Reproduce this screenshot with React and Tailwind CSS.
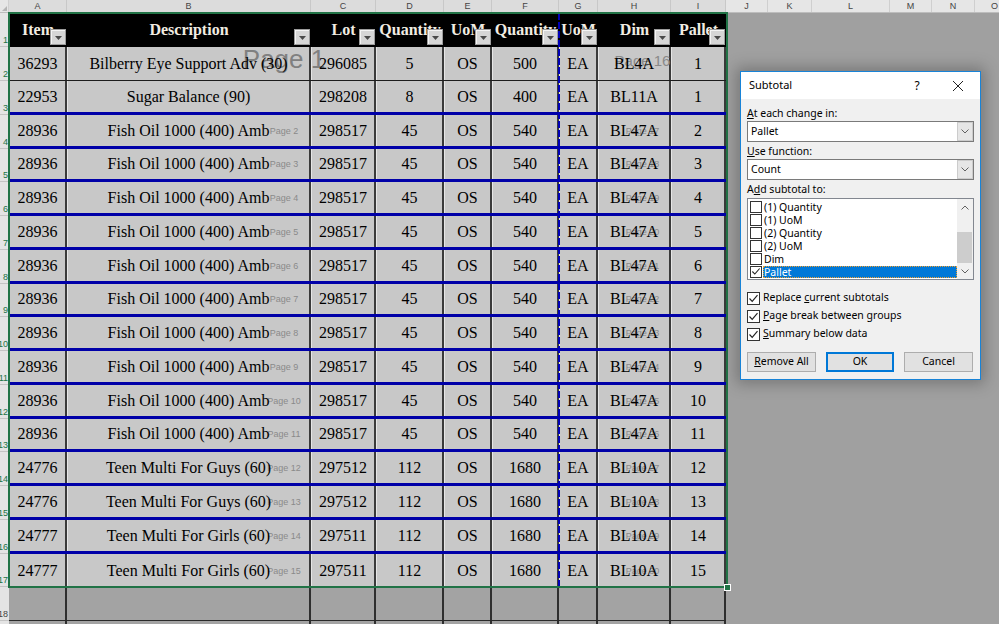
import React from 'react';

const COLS = [
  { l: 'A', w: 'w-[58px]' },
  { l: 'B', w: 'w-[244px]' },
  { l: 'C', w: 'w-[65px]' },
  { l: 'D', w: 'w-[68px]' },
  { l: 'E', w: 'w-[48px]' },
  { l: 'F', w: 'w-[67px]' },
  { l: 'G', w: 'w-[39px]' },
  { l: 'H', w: 'w-[73px]' },
  { l: 'I', w: 'w-[55px]' },
];
const EXTRA = [
  { l: 'J', w: 'w-[42px]' },
  { l: 'K', w: 'w-[44px]' },
  { l: 'L', w: 'w-[78px]' },
  { l: 'M', w: 'w-[42px]' },
  { l: 'N', w: 'w-[43px]' },
  { l: 'O', w: 'w-[40px]' },
];
const HEADERS = ['Item', 'Description', 'Lot', 'Quantity', 'UoM', 'Quantity', 'UoM', 'Dim', 'Pallet'];

const fish = (n) => ['28936', 'Fish Oil 1000 (400) Amb', '298517', '45', 'OS', '540', 'EA', 'BL47A', String(n)];
const ROWS = [
  ['36293', 'Bilberry Eye Support Adv (30)', '296085', '5', 'OS', '500', 'EA', 'BL4A', '1'],
  ['22953', 'Sugar Balance (90)', '298208', '8', 'OS', '400', 'EA', 'BL11A', '1'],
  fish(2), fish(3), fish(4), fish(5), fish(6), fish(7), fish(8), fish(9), fish(10), fish(11),
  ['24776', 'Teen Multi For Guys (60)', '297512', '112', 'OS', '1680', 'EA', 'BL10A', '12'],
  ['24776', 'Teen Multi For Guys (60)', '297512', '112', 'OS', '1680', 'EA', 'BL10A', '13'],
  ['24777', 'Teen Multi For Girls (60)', '297511', '112', 'OS', '1680', 'EA', 'BL10A', '14'],
  ['24777', 'Teen Multi For Girls (60)', '297511', '112', 'OS', '1680', 'EA', 'BL10A', '15'],
];
const HEIGHTS = ['h-[34px]', 'h-[34px]', 'h-[34px]', 'h-[33px]'];

function RowHead({ n, color = 'text-[#217346]' }) {
  return (
    <div className="w-[9px] shrink-0 bg-[#e4e4e4] border-b border-[#c4c4c4] flex items-end justify-end overflow-hidden pr-[1px] pb-[1px]">
      <span className={`text-[9px] leading-[10px] font-['Liberation_Sans',sans-serif] ${color}`}>{n}</span>
    </div>
  );
}

function FilterBtn() {
  return (
    <div className="absolute right-[1px] bottom-[2px] z-20 w-[16px] h-[16px] bg-[#d6d6d6] border border-[#9c9c9c] shadow-[inset_1px_1px_0_#f4f4f4] flex items-center justify-center">
      <svg width="7" height="4" viewBox="0 0 7 4" className="mt-[2px]">
        <polygon points="0,0 7,0 3.5,4" fill="#4a4a4a" />
      </svg>
    </div>
  );
}

function Cell({ w, children }) {
  return (
    <div className={`${w} shrink-0 flex items-center justify-center bg-[#c8c8c8] border-l border-l-[#e6e6e6] border-r-2 border-r-[#3a3a3a] overflow-hidden`}>
      <span className="relative z-10 whitespace-nowrap">{children}</span>
    </div>
  );
}

function PageTag({ children }) {
  return (
    <div className="absolute inset-0 flex items-center justify-center">
      <span className="text-[9px] leading-[10px] text-[#8a8a8a] font-['Liberation_Sans',sans-serif] whitespace-nowrap">{children}</span>
    </div>
  );
}

function DataRow({ i, data }) {
  const h = HEIGHTS[i % 4];
  let bottom = '';
  if (i === 0) bottom = 'border-b border-[#1c1c1c]';
  else if (i < 15) bottom = 'border-b-[3px] border-[#0000a8]';
  return (
    <div className={`flex ${h}`}>
      <RowHead n={i + 2} />
      <div className={`flex ${bottom}`}>
        <div className="relative flex">
          {i >= 2 && <PageTag>Page {i}</PageTag>}
          {COLS.slice(0, 6).map((c, k) => (
            <Cell key={c.l} w={c.w}>{data[k]}</Cell>
          ))}
        </div>
        <div className="relative flex">
          {COLS.slice(6).map((c, k) => (
            <Cell key={c.l} w={c.w}>{data[k + 6]}</Cell>
          ))}
          {i >= 2 && <PageTag>Page {i + 15}</PageTag>}
        </div>
      </div>
    </div>
  );
}

function Chevron({ up = false }) {
  return (
    <svg width="8" height="5" viewBox="0 0 8 5">
      <polyline
        points={up ? '0.5,4.5 4,1 7.5,4.5' : '0.5,0.5 4,4 7.5,0.5'}
        fill="none"
        stroke="#606060"
        strokeWidth="1"
      />
    </svg>
  );
}

function Check() {
  return (
    <svg width="11" height="11" viewBox="0 0 11 11">
      <polyline points="1.5,5.5 4.2,8.3 9.5,2.2" fill="none" stroke="#222" strokeWidth="1.2" />
    </svg>
  );
}

function Select({ value }) {
  return (
    <div className="mt-[1px] h-[21px] w-[227px] bg-white border border-[#7a7a7a] flex">
      <div className="flex-1 flex items-center pl-[3px]">{value}</div>
      <div className="w-[16px] bg-[#e6e6e6] border border-[#cccccc] flex items-center justify-center">
        <Chevron />
      </div>
    </div>
  );
}

const LIST = ['(1) Quantity', '(1) UoM', '(2) Quantity', '(2) UoM', 'Dim', 'Pallet'];

function Dialog() {
  return (
    <div className="absolute left-[740px] top-[71px] w-[241px] h-[309px] z-50 border border-[#1883d7] bg-[#f0f0f0] shadow-[0_0_14px_4px_rgba(0,0,0,0.25)] font-['Noto_Sans',sans-serif] text-[10.5px] text-black flex flex-col">
      <div className="h-[27px] shrink-0 bg-white flex items-center pl-[8px]">
        <span className="text-[11px]">Subtotal</span>
        <span className="ml-auto w-[10px] text-center text-[12px] mr-[30px]">?</span>
        <svg width="12" height="12" viewBox="0 0 12 12" className="mr-[16px]">
          <line x1="1" y1="1" x2="11" y2="11" stroke="#222" strokeWidth="1" />
          <line x1="11" y1="1" x2="1" y2="11" stroke="#222" strokeWidth="1" />
        </svg>
      </div>
      <div className="flex-1 px-[6px] pt-[7px] flex flex-col">
        <div className="h-[14px] leading-[14px]">
          <span className="underline underline-offset-[1px]">A</span>t each change in:
        </div>
        <Select value="Pallet" />
        <div className="mt-[2px] h-[14px] leading-[14px]">
          <span className="underline underline-offset-[1px]">U</span>se function:
        </div>
        <Select value="Count" />
        <div className="mt-[2px] h-[14px] leading-[14px]">
          A<span className="underline underline-offset-[1px]">d</span>d subtotal to:
        </div>
        <div className="mt-[2px] h-[82px] w-[227px] bg-white border border-[#828790] flex">
          <div className="flex-1 pt-[1px] pl-[2px] flex flex-col">
            {LIST.map((t) => {
              const sel = t === 'Pallet';
              return (
                <div key={t} className="h-[13px] flex items-center">
                  <div className="w-[12px] h-[12px] shrink-0 border border-[#333] bg-white flex items-center justify-center">
                    {sel && <Check />}
                  </div>
                  <div
                    className={`ml-[1px] flex-1 h-[12px] leading-[12px] pl-[1px] ${
                      sel ? 'bg-[#0078d7] text-white outline outline-1 outline-dotted outline-[#f0a030] -outline-offset-1' : ''
                    }`}
                  >
                    {t}
                  </div>
                </div>
              );
            })}
          </div>
          <div className="w-[16px] bg-[#f0f0f0] flex flex-col">
            <div className="h-[17px] flex items-center justify-center">
              <Chevron up />
            </div>
            <div className="h-[16px]" />
            <div className="h-[31px] mr-[1px] bg-[#cdcdcd]" />
            <div className="flex-1 flex items-center justify-center">
              <Chevron />
            </div>
          </div>
        </div>
        <div className="mt-[9px] flex flex-col">
          {[
            ['Replace ', 'c', 'urrent subtotals', ''],
            ['', 'P', 'age break between groups', ''],
            ['', 'S', 'ummary below data', ''],
          ].map((p) => (
            <div key={p[2]} className="h-[18px] flex items-center">
              <div className="w-[13px] h-[13px] border border-[#333] bg-white flex items-center justify-center">
                <Check />
              </div>
              <span className="ml-[3px]">
                {p[0]}
                <span className="underline underline-offset-[1px]">{p[1]}</span>
                {p[2]}
              </span>
            </div>
          ))}
        </div>
        <div className="mt-[9px] flex gap-[10px]">
          <div className="w-[69px] h-[20px] bg-[#e1e1e1] border border-[#adadad] flex items-center justify-center">
            <span>
              <span className="underline underline-offset-[1px]">R</span>emove All
            </span>
          </div>
          <div className="w-[68px] h-[20px] bg-[#e1e1e1] border-2 border-[#0078d7] flex items-center justify-center">OK</div>
          <div className="w-[69px] h-[20px] bg-[#e1e1e1] border border-[#adadad] flex items-center justify-center">Cancel</div>
        </div>
      </div>
    </div>
  );
}

export default function App() {
  return (
    <div className="relative w-[999px] h-[624px] overflow-hidden bg-[#a0a0a0] font-['Liberation_Serif',serif] text-[16px] text-black">
      {/* column header row */}
      <div className="flex h-[13px] bg-[#e6e6e6] border-b border-[#bdbdbd] font-['Liberation_Sans',sans-serif] text-[9px] text-[#444]">
        <div className="w-[9px] shrink-0 relative border-r border-[#cfcfcf]">
          <svg width="5" height="5" viewBox="0 0 5 5" className="absolute right-[1px] bottom-[1px]">
            <polygon points="5,0 5,5 0,5" fill="#b5b5b5" />
          </svg>
        </div>
        {COLS.map((c) => (
          <div key={c.l} className={`${c.w} shrink-0 bg-[#dcdcdc] border-r border-[#c8c8c8] flex items-center justify-center leading-[12px]`}>
            {c.l}
          </div>
        ))}
        {EXTRA.map((c) => (
          <div key={c.l} className={`${c.w} shrink-0 border-r border-[#cfcfcf] flex items-center justify-center leading-[12px]`}>
            {c.l}
          </div>
        ))}
      </div>

      {/* header row 1 */}
      <div className="flex h-[34px]">
        <RowHead n={1} />
        {COLS.map((c, k) => (
          <div key={c.l} className={`${c.w} shrink-0 relative bg-black flex items-center justify-center overflow-hidden`}>
            <span className="relative z-10 font-bold text-[#f1ece2] whitespace-nowrap">{HEADERS[k]}</span>
            <FilterBtn />
          </div>
        ))}
      </div>

      {ROWS.map((r, i) => (
        <DataRow key={i} i={i} data={r} />
      ))}

      {/* row 18 */}
      <div className="flex h-[34px]">
        <RowHead n={18} color="text-[#444]" />
        <div className="flex border-b border-[#2a2a2a]">
          {COLS.map((c) => (
            <div key={c.l} className={`${c.w} shrink-0 bg-[#a3a3a3] border-r-2 border-[#2e2e2e]`} />
          ))}
        </div>
      </div>
      <div className="flex h-[3px]">
        <div className="w-[9px] bg-[#e4e4e4]" />
        {COLS.map((c) => (
          <div key={c.l} className={`${c.w} shrink-0 bg-[#a3a3a3] border-r-2 border-[#2e2e2e]`} />
        ))}
      </div>

      {/* page labels spanning rows 1-3 */}
      <div className="absolute left-[9px] top-[44px] w-[550px] h-[30px] leading-[30px] text-center text-[26px] text-[#808080] font-['Liberation_Sans',sans-serif]">
        Page 1
      </div>
      <div className="absolute left-[559px] top-[52px] w-[167px] h-[18px] leading-[18px] text-center text-[15px] text-[#8a8a8a] font-['Liberation_Sans',sans-serif]">
        Page 16
      </div>

      {/* vertical page break */}
      <div className="absolute left-[558px] top-[13px] w-[2px] h-[574px] z-20 bg-[repeating-linear-gradient(to_bottom,#0000b8_0px,#0000b8_7px,transparent_7px,transparent_9px)]" />

      {/* selection */}
      <div className="absolute left-[8px] top-[12px] w-[720px] h-[576px] z-30 border-2 border-[#217346] pointer-events-none" />
      <div className="absolute left-[724px] top-[584px] w-[7px] h-[7px] z-30 bg-[#217346] border border-white" />

      <Dialog />
    </div>
  );
}
